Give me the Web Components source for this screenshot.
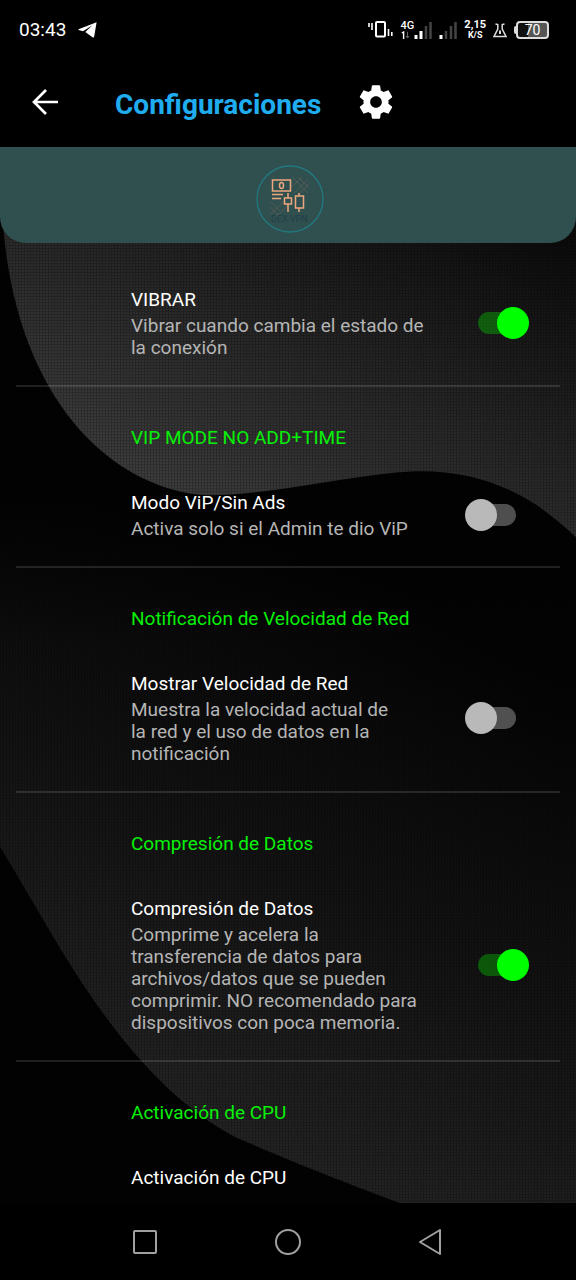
<!DOCTYPE html>
<html lang="es">
<head>
<meta charset="utf-8">
<meta name="viewport" content="width=device-width, initial-scale=1">
<title>Configuraciones</title>
<style>
html, body { margin: 0; background: #000; }
body { font-family: Roboto, "Noto Sans", sans-serif; color: #fff; }
</style>
</head>
<body>
<settings-screen></settings-screen>
<script>
const define = (name, html, setup) => {
  const tpl = document.createElement('template');
  tpl.innerHTML = html;
  customElements.define(name, class extends HTMLElement {
    constructor() {
      super();
      this.attachShadow({ mode: 'open' }).append(tpl.content.cloneNode(true));
    }
    connectedCallback() { if (setup) setup(this, this.shadowRoot); }
  });
};

define('status-bar', `
<style>
:host { display: flex; align-items: center; justify-content: space-between; height: 60px; padding: 0 27px 0 19px; box-sizing: border-box; }
.left, .right { display: flex; align-items: center; }
.left { gap: 12px; font-size: 19px; line-height: 24px; }
.right { gap: 7px; }
.stack { display: flex; flex-direction: column; align-items: center; font-size: 11px; line-height: 10px; font-weight: 700; }
.cell { display: flex; align-items: center; }
.net { font-weight: 500; align-items: flex-start; }
.speed small { font-size: 9px; }
.batt { display: flex; align-items: center; }
.nub { width: 2px; height: 8px; border-radius: 2px 0 0 2px; background: #ddd; }
.box { box-sizing: border-box; width: 33px; height: 18px; border: 2px solid #ddd; border-radius: 4px; background: linear-gradient(to left, #555 65%, #111 65%); font-size: 14px; line-height: 14px; text-align: center; }
svg { display: block; }
</style>
<div class="left"><span>03:43</span>
<svg width="19" height="16" viewBox="0 0 19 16" fill="#fff" aria-hidden="true"><path d="M18.600 0.300 0.500 7.200Q0 7.600 0.600 7.900L5 9.200 14.500 3.200 7.300 10.100 14.800 15.400Q15.900 15.900 16.200 14.600Z"/></svg></div>
<div class="right">
<svg width="26" height="22" viewBox="0 0 26 22" aria-hidden="true"><rect x="8" y="3" width="9" height="14.500" rx="1" fill="none" stroke="#fff" stroke-width="2"/><path d="M1 4v4M4 4v7M20.500 10v7M23.800 13v4" stroke="#fff" stroke-width="1.600" fill="none"/></svg>
<div class="cell"><div class="stack net"><span>4G</span>
<svg width="10" height="8" viewBox="0 0 10 8" aria-hidden="true"><path d="M.8 2 2.600 1v7" stroke="#fff" stroke-width="1.400" fill="none"/><path d="M6.500 1v6M5 5l1.500 2L8 5" stroke="#666" fill="none"/></svg></div>
<svg width="18" height="18" viewBox="0 0 18 18" aria-hidden="true"><path d="M2 14v4M7 10v8" stroke="#fff" stroke-width="3"/><path d="M12 5v13M16.500 1v17" stroke="#444" stroke-width="2.500"/></svg></div>
<svg width="18" height="18" viewBox="0 0 18 18" aria-hidden="true"><path d="M2 14v4" stroke="#fff" stroke-width="3"/><path d="M7 10v8M12 5v13M16.500 1v17" stroke="#444" stroke-width="2.500"/></svg>
<div class="stack speed"><span>2,15</span><small>K/S</small></div>
<svg width="14" height="15" viewBox="0 0 14 15" aria-hidden="true"><path d="M2.500 1 4.800 1.500V6L1 13.500H13L9.200 6V1.500L11.500 1" fill="none" stroke="#ddd" stroke-width="1.500"/><path d="M7 7.500v3.500" stroke="#ddd" stroke-width="2"/></svg>
<div class="batt"><span class="nub"></span><div class="box">70</div></div>
</div>`);

define('title-bar', `
<style>
:host { display: flex; align-items: center; height: 87px; padding: 0 28px; box-sizing: border-box; }
button { all: unset; display: block; cursor: pointer; padding-bottom: 3px; }
button:focus-visible { outline: 2px solid #29a8e8; }
h1 { margin: 0 35px 0 53px; padding-top: 2px; font-size: 28px; line-height: 34px; font-weight: 700; color: #1fadf0; }
svg { display: block; }
</style>
<button aria-label="Volver"><svg width="34" height="34" viewBox="0 0 34 34" fill="none" stroke="#fff" stroke-width="2.700"><path d="M30 17H6M18 5 6 17 18 29"/></svg></button>
<h1><slot></slot></h1>
<button aria-label="Ajustes"><svg width="40" height="40" viewBox="0 0 24 24" fill="#fff"><path d="M19.430 12.980c.04-.32.07-.64.07-.98s-.03-.66-.07-.98l2.110-1.650c.19-.15.24-.42.12-.64l-2-3.460c-.12-.22-.39-.3-.61-.22l-2.490 1c-.52-.4-1.080-.73-1.690-.98l-.38-2.650C14.460 2.180 14.250 2 14 2h-4c-.25 0-.46.18-.49.42l-.38 2.650c-.61.25-1.170.59-1.690.98l-2.490-1c-.23-.09-.49 0-.61.22l-2 3.460c-.13.22-.07.49.12.64l2.110 1.650c-.04.32-.07.65-.07.98s.03.66.07.98l-2.110 1.650c-.19.15-.24.42-.12.64l2 3.460c.12.22.39.3.61.22l2.490-1c.52.4 1.080.73 1.690.98l.38 2.650c.03.24.24.42.49.42h4c.25 0 .46-.18.49-.42l.38-2.650c.61-.25 1.170-.59 1.690-.98l2.490 1c.23.09.49 0 .61-.22l2-3.460c.12-.22.07-.49-.12-.64l-2.110-1.650zM12 15.500c-1.930 0-3.500-1.570-3.500-3.500s1.570-3.500 3.500-3.500 3.500 1.570 3.500 3.500-1.570 3.500-3.500 3.500z"/></svg></button>`);

define('brand-banner', `
<style>
:host { display: flex; justify-content: center; align-items: center; height: 96px; padding: 8px 0 0 4px; box-sizing: border-box; background: #305050; border-radius: 0 0 26px 26px; }
svg { display: block; }
text { font: 9px Roboto, sans-serif; fill: #1f3f46; }
</style>
<svg width="68" height="68" viewBox="0 0 68 68" role="img" aria-label="DEX VPN">
<circle cx="34" cy="34" r="33" fill="none" stroke="#217980" stroke-width="1.300"/>
<g stroke="#5c5c55" stroke-width=".8" fill="none"><path d="M36 22 46 12M38 28 52 14M44 28 54 18M14 36l10 10M14 42l8 8M14 50l14-14M20 52l12-12M36 12l16 16M42 12l10 10"/></g>
<g stroke="#eda77c" stroke-width="1.500" fill="none"><rect x="16.500" y="15" width="18" height="11"/><ellipse cx="25.500" cy="20.500" rx="2" ry="3"/><path d="M16 29.500h11M16 33.500h9M32 28v5M32 39v8M43 28v3M43 43v4"/><rect x="28.500" y="33" width="7" height="6"/><rect x="39.500" y="31" width="8" height="12"/></g>
<text x="15" y="57">DEX VPN</text>
</svg>`);

define('toggle-switch', `
<style>
:host { display: flex; padding-bottom: 2px; }
input { appearance: none; margin: 0; width: 51px; height: 32px; display: grid; align-items: center; cursor: pointer; border-radius: 16px; }
input::before, input::after { content: ""; grid-area: 1 / 1; }
input::before { height: 22px; width: 38px; border-radius: 11px; background: rgba(255,255,255,.3); justify-self: end; }
input::after { width: 32px; height: 32px; border-radius: 50%; background: #b9b9b9; justify-self: start; }
input:checked::before { background: rgba(0,255,0,.3); justify-self: start; }
input:checked::after { background: #0f0; justify-self: end; }
:host(:not([checked])) { margin-right: 13px; }
</style>
<input type="checkbox" role="switch">`, (el, root) => {
  const box = root.querySelector('input');
  box.checked = el.hasAttribute('checked');
  box.setAttribute('aria-label', el.getAttribute('label'));
  box.addEventListener('change', () => el.toggleAttribute('checked', box.checked));
});

define('pref-category', `
<style>
:host { display: block; padding: 40px 16px 20px 131px; }
h2 { margin: 0; font-size: 19px; line-height: 24px; font-weight: 400; color: #08f008; }
</style>
<h2><slot></slot></h2>`);

define('pref-item', `
<style>
:host { display: flex; align-items: center; justify-content: space-between; padding: 21px 47px 26px 131px; }
:host([compact]) { padding-bottom: 0; }
.title { font-size: 19px; line-height: 24px; color: #fff; margin-bottom: 3px; }
.summary { font-size: 19px; line-height: 22px; color: #b5b5b5; }
</style>
<div><div class="title"><slot name="title"></slot></div><div class="summary"><slot></slot></div></div>
<slot name="widget"></slot>`);

define('pref-section', `
<style>
:host { display: block; position: relative; }
:host(:not([last]))::after { content: ""; display: block; height: 2px; margin: 0 16px; background: rgba(255,255,255,.12); }
:host(:not([last])) { margin-bottom: -1px; }
</style>
<slot></slot>`);

define('wave-backdrop', `
<style>
:host { position: absolute; inset: 0; display: block; }
svg { display: block; width: 100%; height: 100%; }
</style>
<svg viewBox="0 148 576 1055" preserveAspectRatio="none" aria-hidden="true">
<defs>
<linearGradient id="top" gradientUnits="userSpaceOnUse" x1="150" y1="500" x2="330" y2="130"><stop offset="0" stop-color="#3f3f3f"/><stop offset=".5" stop-color="#272727"/><stop offset="1" stop-color="#0c0c0c"/></linearGradient>
<linearGradient id="low" gradientUnits="userSpaceOnUse" x1="150" y1="1150" x2="420" y2="600"><stop offset="0" stop-color="#272727"/><stop offset=".5" stop-color="#131313"/><stop offset="1" stop-color="#030303"/></linearGradient>
<linearGradient id="fade" x1="0" y1="0" x2="0" y2="1"><stop offset="0" stop-color="#020202"/><stop offset="1" stop-color="#020202" stop-opacity="0"/></linearGradient>
<pattern id="mesh" width="3" height="3" patternUnits="userSpaceOnUse"><path d="M0 0H3V1H1V3H0Z" fill="#000" fill-opacity=".25"/></pattern>
</defs>
<path d="M0 148H576V1203H0Z" fill="#020202"/>
<path d="M0 470H576V1203H400C370 1192 294 1163 235 1137C165 1100 110 1030 61 950C40 915 20 880 0 847Z" fill="url(#low)"/>
<path d="M0 469H576V640H0Z" fill="url(#fade)"/>
<path d="M0 148H576V538C555 518 535 503 514 493C485 478 450 471 415 472C350 475 275 496 206 496C110 489 20 400 4 236Q2 215 0 210Z" fill="url(#top)"/>
<path d="M0 148H576V1203H0Z" fill="url(#mesh)"/>
</svg>`);

define('nav-bar', `
<style>
:host { display: grid; grid-template-columns: repeat(3, 142px); justify-content: center; place-items: center; height: 77px; background: #000; }
button { all: unset; cursor: pointer; }
button:focus-visible { outline: 2px solid #999; }
svg { display: block; fill: none; stroke: #a0a0a0; stroke-width: 2; stroke-linejoin: round; }
</style>
<button aria-label="Recientes"><svg width="26" height="26" viewBox="0 0 26 26"><rect x="1" y="2" width="22" height="22" rx="1"/></svg></button>
<button aria-label="Inicio"><svg width="26" height="26" viewBox="0 0 26 26"><circle cx="13" cy="13" r="12"/></svg></button>
<button aria-label="Atrás"><svg width="26" height="26" viewBox="0 0 26 26"><path d="M23 1V25L3 13Z"/></svg></button>`);

define('settings-screen', `
<style>
:host { display: flex; flex-direction: column; min-height: 100vh; background: #000; }
main { position: relative; flex: 1; }
brand-banner { position: relative; }
pref-section:first-of-type { padding-top: 24px; }
</style>
<status-bar></status-bar>
<title-bar>Configuraciones</title-bar>
<main>
<wave-backdrop></wave-backdrop>
<brand-banner></brand-banner>
<pref-section>
<pref-item><span slot="title">VIBRAR</span>Vibrar cuando cambia el estado de<br>la conexión<toggle-switch slot="widget" label="VIBRAR" checked></toggle-switch></pref-item>
</pref-section>
<pref-section>
<pref-category>VIP MODE NO ADD+TIME</pref-category>
<pref-item><span slot="title">Modo ViP/Sin Ads</span>Activa solo si el Admin te dio ViP<toggle-switch slot="widget" label="Modo ViP/Sin Ads"></toggle-switch></pref-item>
</pref-section>
<pref-section>
<pref-category>Notificación de Velocidad de Red</pref-category>
<pref-item><span slot="title">Mostrar Velocidad de Red</span>Muestra la velocidad actual de<br>la red y el uso de datos en la<br>notificación<toggle-switch slot="widget" label="Mostrar Velocidad de Red"></toggle-switch></pref-item>
</pref-section>
<pref-section>
<pref-category>Compresión de Datos</pref-category>
<pref-item><span slot="title">Compresión de Datos</span>Comprime y acelera la<br>transferencia de datos para<br>archivos/datos que se pueden<br>comprimir. NO recomendado para<br>dispositivos con poca memoria.<toggle-switch slot="widget" label="Compresión de Datos" checked></toggle-switch></pref-item>
</pref-section>
<pref-section last>
<pref-category>Activación de CPU</pref-category>
<pref-item compact><span slot="title">Activación de CPU</span></pref-item>
</pref-section>
</main>
<nav-bar></nav-bar>`);
</script>
</body>
</html>
